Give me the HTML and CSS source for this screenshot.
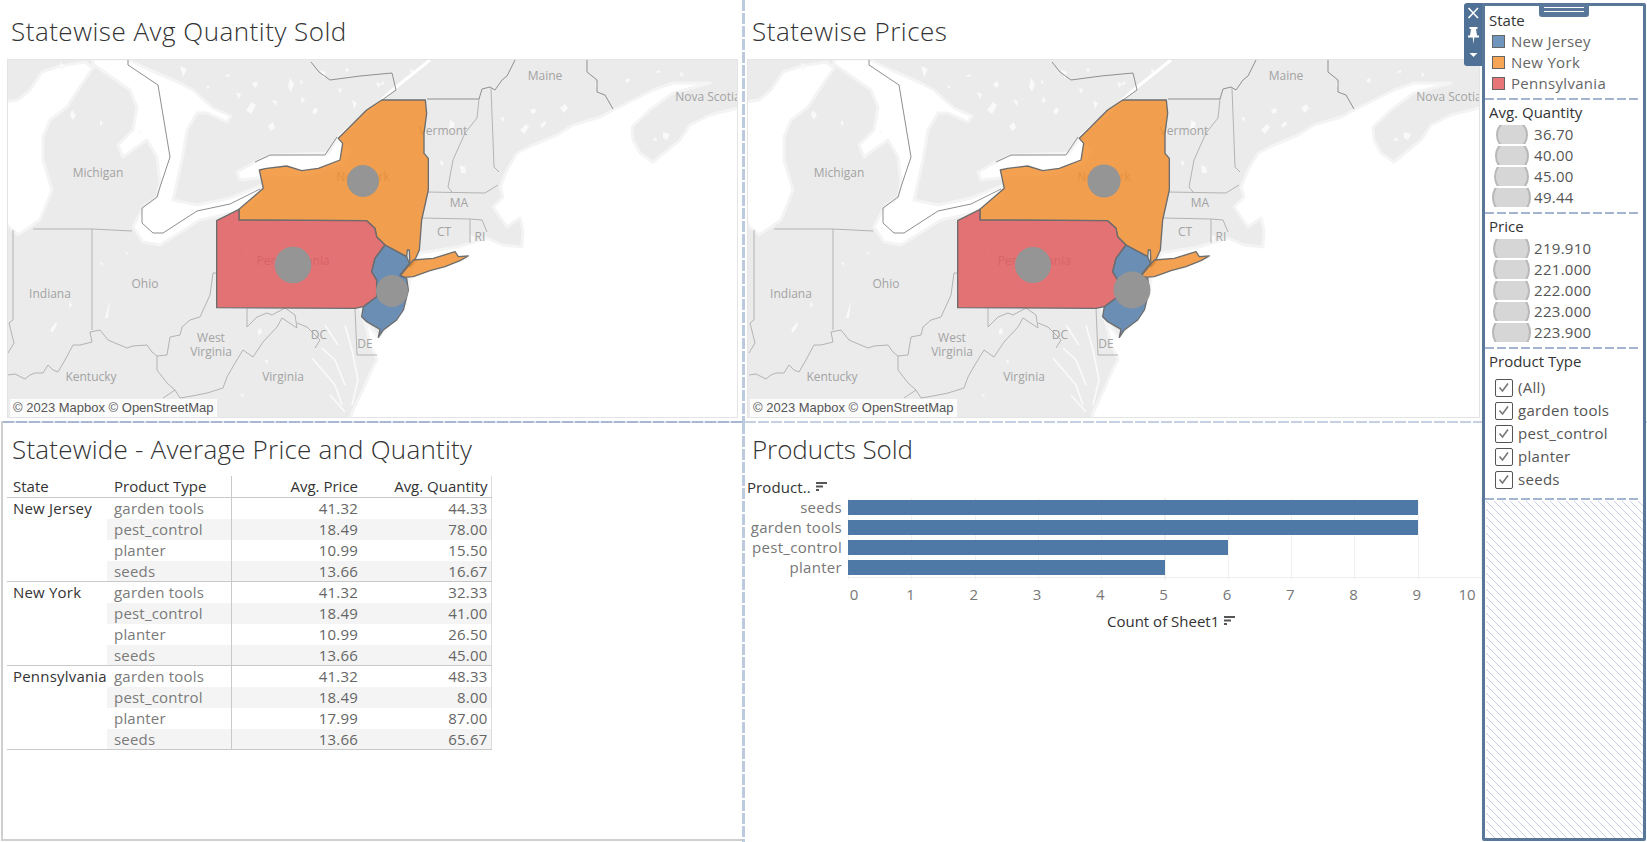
FILE: index.html
```html
<!DOCTYPE html>
<html lang="en">
<head>
<meta charset="utf-8">
<title>Dashboard</title>
<link rel="stylesheet" href="styles.css">
</head>
<body>
<div class="board">
  <section class="cell">
    <h2 class="title title-wide">Statewise Avg Quantity Sold</h2>
    <div class="map map-left">
      <svg class="map-svg" viewBox="7 59 731 359" preserveAspectRatio="none" aria-label="Map of quantity by state">
        <g id="basemap">
          <rect class="land" x="0" y="50" width="760" height="380"/>
          <g class="water">
            <path d="M745 106L738 108L710 115L690 125L680 140L665 152L653 162L640 153L633 140L632 127L650 110L673 93L710 83L673 83L653 90L633 100L613 110L600 117L573 125L557 135L533 145L517 153L507 170L500 187L503 197L493 207L507 227L520 218L523 230L522 247L503 245L487 238L457 247L420 253L413 267L408 290L403 310L378 337L362 317L363 305L360 307L367 330L370 347L373 350L377 360L373 367L365 385L352 413L349 425L745 425Z"/>
            <path d="M4 218L8 226L18 235L40 220L52 190L43 160L43 137L50 120L67 107L80 87L93 68L85 62L60 66L42 72L30 90L18 100L4 102Z"/>
            <path d="M93 59L93 64L130 90L137 107L133 130L118 145L123 157L147 140L157 157L160 183L157 197L143 207L133 227L143 242L160 245L200 220L233 213L262 197L260 186L230 198L197 205L173 200L182 160L187 130L197 113L207 113L227 122L231 116L213 108L193 90L180 83L150 70L127 59Z"/>
            <path d="M237 172L255 162L270 155L328 153L340 136L352 150L345 165L300 178L260 178L240 180Z"/>
            <path class="thin" d="M340 136L365 115L390 92L415 72L430 60"/>
            <path class="thinner" d="M345 325L352 350L358 380L352 405M322 348L335 360L345 385M312 358L335 385L342 405M325 325L338 345M330 395L345 412"/>
          </g>
          <g class="speck">
            <path d="M60 62l5 4-3 6zM180 66l7 3-4 8zM246 110l6-8 4 3-5 9zM268 126l5-4 2 6-4 3zM290 78l4 6-3 8-3-5zM320 70l6 2-2 7zM352 100l5 3-3 6zM72 110l4 5-3 5-3-5zM450 120l5 3-2 7-4-2zM520 130l6-6 3 3-5 7zM560 108l5-4 3 4-4 5zM245 250l4 3-3 3zM110 300l-3 10-2 8 3 0zM50 330l6-8 1 3-5 8zM258 330l3-2 1 5-4 2zM663 132l7 2-3 6-4-2zM460 165l5 2 1 6-5 0zM470 235l5 2-3 6z"/>
            <path d="M236 92l5 2-2 5zM252 84l4-3 2 4-3 3zM272 100l5 1-1 5zM302 96l3 5-4 2zM312 112l3-5 3 3-3 5zM338 88l4 1-2 5zM376 82l5 2-3 4zM410 68l4 3-3 4zM345 68l4 1-2 4zM530 110l5-2 1 4-4 2zM540 125l5-4 1 3-4 4zM500 118l4-1 0 5zM595 82l3 2-2 4zM625 80l4-2 1 3-3 2zM655 72l5-2 0 3zM680 72l4 2-3 3zM652 140l4-3 1 4zM138 130l3 1-1 4zM100 120l3 3-3 3zM70 300l2 6-3 2zM100 262l3 1-1 3zM125 252l4 1-2 2zM265 360l3 0-1 5zM240 395l4-1-1 3zM380 85l3-4 2 3zM440 160l4 3-3 3zM300 80l3 2-2 3zM206 86l4 0-2 3zM224 76l5-2 1 3z"/>
          </g>
          <g class="borders">
            <path class="strong" d="M128 60L128 65L158 85L170 157L160 187L157 197L142 208L142 223L153 233L163 233L197 211L230 204L260 189"/>
            <path class="strong" d="M255 162L270 155L325 155L337 137"/>
            <path class="strong" d="M311 62L319 72L330 80L345 78L360 76L392 73L396 90L382 100M427 99L479 99L482 89L490 87L495 90L502 80L507 76L515 60"/>
            <path d="M491 88L494 167L499 172M479 99L477 118L465 133L453 160L448 187L452 192M427 192L485 193L498 185M422 218L470 219L482 220L487 232M470 219L470 243"/>
            <path class="strong" d="M587 60L587 72L597 80L597 92L605 95L613 109"/>
            <path d="M33 229L92 229L132 231M92 229L92 330M13 230L13 320L9 323L14 343L8 353"/>
            <path d="M8 375L15 374L25 379L30 375L35 373L43 373L48 365L53 370L58 372L65 360L73 345L80 345L92 342L90 332L100 330L108 340L115 343L127 348L133 346L147 345L152 352L157 356L167 355L170 337L180 335L182 327L190 320L200 317L210 295L213 273L217 273"/>
            <path d="M157 356L157 370L167 383L175 390L163 398M175 390L180 398L192 396L207 393L223 388L227 377L235 363L243 350L253 357L263 342L277 327L282 318"/>
            <path d="M247 308L247 327L257 317L267 313L272 315L285 308L295 315L297 328L282 318M297 323L307 327L315 335L320 340L315 348M355 308L357 355L377 355"/>
          </g>
          <g class="labels">
            <text x="98" y="177">Michigan</text>
            <text x="545" y="80">Maine</text>
            <text x="708" y="101">Nova Scotia</text>
            <text x="443" y="135">Vermont</text>
            <text x="459" y="207">MA</text>
            <text x="444" y="236">CT</text>
            <text x="480" y="241">RI</text>
            <text x="145" y="288">Ohio</text>
            <text x="50" y="298">Indiana</text>
            <text x="211" y="342">West</text>
            <text x="211" y="356">Virginia</text>
            <text x="91" y="381">Kentucky</text>
            <text x="283" y="381">Virginia</text>
            <text x="319" y="339">DC</text>
            <text x="365" y="348">DE</text>
            <text x="363" y="181">New York</text>
            <text x="293" y="265">Pennsylvania</text>
          </g>
          <g class="states" transform="translate(200 90) scale(.33333)">
            <path class="st-ny" d="M676 30L680 70L672 130L672 190L685 205L685 300L665 390L658 480L640 520L630 530L628 480L622 480L620 500L555 465L530 440L525 415L500 392L117 390L117 358L190 295L178 240L200 235L260 228L305 242L355 235L420 210L428 160L415 145L450 110L500 60L545 30Z"/>
            <path class="st-ny" d="M600 558L640 510L700 505L765 485L775 500L805 498L780 512L735 530L690 542L640 560L610 562Z"/>
            <path class="st-pa" d="M50 392L117 358L117 390L500 392L525 415L530 440L555 465L525 505L515 545L530 570L530 620L490 650L465 655L50 653Z"/>
            <path class="st-nj" d="M555 465L620 500L628 520L600 555L620 565L625 600L610 660L590 690L550 720L535 742L540 718L500 695L485 680L490 650L530 620L530 570L515 545L525 505Z"/>
          </g>
        </g>
        <circle class="bubble" cx="363" cy="181" r="16"/>
        <circle class="bubble" cx="293" cy="265" r="18.3"/>
        <circle class="bubble" cx="392" cy="291" r="16"/>
      </svg>
      <span class="credit">© 2023 Mapbox © OpenStreetMap</span>
    </div>
  </section>
  <div class="vsep"></div>
  <section class="cell">
    <h2 class="title title-right title-wide">Statewise Prices</h2>
    <div class="map map-right">
      <svg class="map-svg" viewBox="6 59 733 359" preserveAspectRatio="none" aria-label="Map of price by state">
        <use href="#basemap"/>
        <circle class="bubble" cx="363" cy="181" r="16.5"/>
        <circle class="bubble" cx="292" cy="265" r="18"/>
        <circle class="bubble" cx="391" cy="290" r="18.5"/>
      </svg>
      <span class="credit">© 2023 Mapbox © OpenStreetMap</span>
    </div>
  </section>

  <section class="cell cell-table">
    <h2 class="title">Statewide - Average Price and Quantity</h2>
    <table class="crosstab">
      <thead>
        <tr><th class="c-state">State</th><th class="c-type">Product Type</th><th class="c-num">Avg. Price</th><th class="c-num">Avg. Quantity</th></tr>
      </thead>
      <tbody>
        <tr><th class="c-state" rowspan="4">New Jersey</th><td class="c-type">garden tools</td><td class="c-num">41.32</td><td class="c-num">44.33</td></tr>
        <tr class="alt"><td class="c-type">pest_control</td><td class="c-num">18.49</td><td class="c-num">78.00</td></tr>
        <tr><td class="c-type">planter</td><td class="c-num">10.99</td><td class="c-num">15.50</td></tr>
        <tr class="alt end"><td class="c-type">seeds</td><td class="c-num">13.66</td><td class="c-num">16.67</td></tr>
        <tr><th class="c-state" rowspan="4">New York</th><td class="c-type">garden tools</td><td class="c-num">41.32</td><td class="c-num">32.33</td></tr>
        <tr class="alt"><td class="c-type">pest_control</td><td class="c-num">18.49</td><td class="c-num">41.00</td></tr>
        <tr><td class="c-type">planter</td><td class="c-num">10.99</td><td class="c-num">26.50</td></tr>
        <tr class="alt end"><td class="c-type">seeds</td><td class="c-num">13.66</td><td class="c-num">45.00</td></tr>
        <tr><th class="c-state" rowspan="4">Pennsylvania</th><td class="c-type">garden tools</td><td class="c-num">41.32</td><td class="c-num">48.33</td></tr>
        <tr class="alt"><td class="c-type">pest_control</td><td class="c-num">18.49</td><td class="c-num">8.00</td></tr>
        <tr><td class="c-type">planter</td><td class="c-num">17.99</td><td class="c-num">87.00</td></tr>
        <tr class="alt end"><td class="c-type">seeds</td><td class="c-num">13.66</td><td class="c-num">65.67</td></tr>
      </tbody>
    </table>
  </section>
  <div class="vsep"></div>
  <section class="cell cell-chart">
    <h2 class="title title-right">Products Sold</h2>
    <div class="chart">
      <div class="chart-head">Product..
        <svg class="sort" viewBox="0 0 11 9" aria-hidden="true"><path d="M0 0h11v2H0zM0 3.500h7v2H0zM0 7h3v2H0z"/></svg>
      </div>
      <div class="bars">
        <div class="bar-row"><span class="bar-label">seeds</span><span class="bar-track"><span class="bar" style="width:90%"></span></span></div>
        <div class="bar-row"><span class="bar-label">garden tools</span><span class="bar-track"><span class="bar" style="width:90%"></span></span></div>
        <div class="bar-row"><span class="bar-label">pest_control</span><span class="bar-track"><span class="bar" style="width:60%"></span></span></div>
        <div class="bar-row"><span class="bar-label">planter</span><span class="bar-track"><span class="bar" style="width:50%"></span></span></div>
      </div>
      <div class="ticks">
        <span>0</span><span>1</span><span>2</span><span>3</span><span>4</span><span>5</span><span>6</span><span>7</span><span>8</span><span>9</span><span>10</span>
      </div>
      <div class="axis-title">Count of Sheet1
        <svg class="sort" viewBox="0 0 11 9" aria-hidden="true"><path d="M0 0h11v2H0zM0 3.500h7v2H0zM0 7h3v2H0z"/></svg>
      </div>
    </div>
  </section>
</div>

<aside class="tools" aria-label="Panel tools">
  <svg viewBox="0 0 19 63" aria-hidden="true">
    <path class="t-x" d="M4.500 5L14 15M14 5L4.500 15"/>
    <path class="t-fill" d="M5.500 24h8v2h-1.500L13 32.500H15V34.500H10.300L9.500 41L8.700 34.500H4V32.500H6L7 26H5.500z"/>
    <path class="t-fill" d="M5.500 50h8l-4 4z"/>
  </svg>
</aside>

<aside class="panel">
  <div class="grip"><span></span><span></span></div>
  <div class="group group-state">
    <h3 class="group-title">State</h3>
    <div class="legend-row"><span class="swatch sw-nj"></span>New Jersey</div>
    <div class="legend-row"><span class="swatch sw-ny"></span>New York</div>
    <div class="legend-row"><span class="swatch sw-pa"></span>Pennsylvania</div>
  </div>
  <div class="group group-size">
    <h3 class="group-title">Avg. Quantity</h3>
    <div class="size-row"><span class="size-box"><span class="dot d32"></span></span>36.70</div>
    <div class="size-row"><span class="size-box"><span class="dot d34"></span></span>40.00</div>
    <div class="size-row"><span class="size-box"><span class="dot d35"></span></span>45.00</div>
    <div class="size-row"><span class="size-box"><span class="dot d38"></span></span>49.44</div>
  </div>
  <div class="group group-size">
    <h3 class="group-title">Price</h3>
    <div class="size-row"><span class="size-box"><span class="dot d37"></span></span>219.910</div>
    <div class="size-row"><span class="size-box"><span class="dot d37"></span></span>221.000</div>
    <div class="size-row"><span class="size-box"><span class="dot d37"></span></span>222.000</div>
    <div class="size-row"><span class="size-box"><span class="dot d37"></span></span>223.000</div>
    <div class="size-row"><span class="size-box"><span class="dot d38"></span></span>223.900</div>
  </div>
  <div class="group group-filter">
    <h3 class="group-title">Product Type</h3>
    <label class="check-row"><span class="check"><svg viewBox="0 0 16 16" aria-hidden="true"><path d="M3.500 7.500L6.500 11L12 3.500"/></svg></span>(All)</label>
    <label class="check-row"><span class="check"><svg viewBox="0 0 16 16" aria-hidden="true"><path d="M3.500 7.500L6.500 11L12 3.500"/></svg></span>garden tools</label>
    <label class="check-row"><span class="check"><svg viewBox="0 0 16 16" aria-hidden="true"><path d="M3.500 7.500L6.500 11L12 3.500"/></svg></span>pest_control</label>
    <label class="check-row"><span class="check"><svg viewBox="0 0 16 16" aria-hidden="true"><path d="M3.500 7.500L6.500 11L12 3.500"/></svg></span>planter</label>
    <label class="check-row"><span class="check"><svg viewBox="0 0 16 16" aria-hidden="true"><path d="M3.500 7.500L6.500 11L12 3.500"/></svg></span>seeds</label>
  </div>
  <div class="hatch"></div>
</aside>
</body>
</html>
```

FILE: styles.css
```css
* { box-sizing: border-box; }
html, body { margin: 0; padding: 0; }
body {
  width: 1647px;
  height: 842px;
  overflow: hidden;
  position: relative;
  background: #fff;
  font-family: "Open Sans", "Noto Sans", sans-serif;
  color: #333;
}

.board {
  display: grid;
  grid-template-columns: 742px 3px 902px;
  grid-template-rows: 423px 419px;
  height: 842px;
}

.cell { min-width: 0; }

.vsep {
  background: repeating-linear-gradient(180deg, #bccade 0 11px, transparent 11px 13px);
}

.title {
  margin: 0;
  height: 59px;
  padding: 14px 0 0 11px;
  font-size: 26px;
  line-height: 34px;
  font-weight: 300;
  letter-spacing: .22px;
  color: #333;
}
.title-wide { letter-spacing: .5px; }
.title-right { padding-left: 7px; }

.map { position: relative; height: 359px; outline: 1px solid #e4e4e4; outline-offset: -1px; }
.map-left { margin-left: 7px; width: 731px; }
.map-right { margin-left: 2px; width: 733px; }
.map-svg { display: block; width: 100%; height: 100%; }

.land { fill: #ebebeb; }
.water, .speck { filter: blur(.6px); }
.water path { fill: #fff; stroke: #f4f4f4; stroke-width: 3; stroke-linejoin: round; }
.water .thin { fill: none; stroke: #fff; stroke-width: 3; }
.water .thinner { fill: none; stroke: #fafafa; stroke-width: 1.600; }
.speck { fill: #f9f9f9; }
.borders path { fill: none; stroke: #adadad; stroke-width: .9; }
.borders .strong { stroke: #8f8f8f; stroke-width: 1; }
.labels text { font-size: 12px; fill: #a3a3a3; text-anchor: middle; }
.states path { stroke: #6d6d6d; stroke-width: 4; stroke-linejoin: round; }
.st-ny { fill: rgba(242, 142, 43, .82); }
.st-pa { fill: rgba(225, 87, 89, .82); }
.st-nj { fill: rgba(78, 121, 167, .82); }
.bubble { fill: #959595; }

.credit {
  position: absolute;
  left: 3px;
  bottom: 1px;
  height: 18px;
  padding: 0 3px;
  background: rgba(255, 255, 255, .85);
  font-family: "Liberation Sans", Arial, sans-serif;
  font-size: 13px;
  line-height: 18px;
  color: #555;
  white-space: nowrap;
}

.cell-table {
  border-left: 2px solid #cfcfcf;
  border-bottom: 2px solid #cfcfcf;
  margin: -2px 0 1px 1px;
  position: relative;
  background: repeating-linear-gradient(90deg, #a9b8d2 0 11px, #dfe5ef 11px 13px) top / 100% 2px no-repeat;
}
.cell-table .title { height: 55px; padding: 11px 0 0 9px; }

.crosstab {
  border-collapse: collapse;
  table-layout: fixed;
  width: 484px;
  margin-left: 4px;
  font-size: 15px;
  letter-spacing: .2px;
}
.crosstab th, .crosstab td { padding: 0; height: 21px; line-height: 20px; white-space: nowrap; font-weight: 400; vertical-align: top; }
.crosstab thead th { height: 21px; line-height: 21px; color: #333; border-bottom: 1px solid #c9c9c9; font-weight: 500; vertical-align: bottom; letter-spacing: 0; }
.crosstab .c-state { width: 100px; padding-left: 6px; text-align: left; color: #333; border-bottom: 1px solid #c9c9c9; }
.crosstab .c-type { width: 124px; padding-left: 7px; text-align: left; color: #7a7a7a; border-right: 1px solid #c9c9c9; }
.crosstab .c-num { width: 130px; padding-right: 3px; text-align: right; color: #666; }
.crosstab .c-num:last-child { border-right: 1px solid #dcdcdc; }
.crosstab thead .c-type, .crosstab thead .c-num { color: #333; }
.crosstab .alt td { background: #f4f4f4; }
.crosstab .end td { border-bottom: 1px solid #c9c9c9; }

.cell-chart { position: relative; background: repeating-linear-gradient(90deg, #c5d0e3 0 11px, transparent 11px 13px) top / 100% 2px no-repeat; margin-top: -2px; }
.cell-chart .title { height: 56px; padding: 11px 0 0 7px; letter-spacing: -.1px; }

.chart { padding-left: 2px; font-size: 15px; }
.chart-head { display: flex; align-items: center; gap: 5px; height: 19px; color: #333; font-weight: 500; letter-spacing: .1px; }
.sort { width: 11px; height: 9px; fill: #555; flex: none; }

.bars {
  margin-top: 2px;
  width: 735px;
  height: 82px;
  background:
    linear-gradient(#eee, #eee) 101px 79px / 634px 1px no-repeat,
    repeating-linear-gradient(90deg, #f1f1f1 0 1px, transparent 1px 63.300px) 101px 0 / 634px 100% no-repeat;
}
.bar-row { display: flex; align-items: center; height: 20px; }
.bar-label { width: 95px; margin: -2px 6px 0 0; flex: none; text-align: right; color: #777; letter-spacing: .3px; }
.bar-track { display: block; width: 633px; flex: none; }
.bar { display: block; height: 15px; background: #4e79a7; margin-top: -1px; }

.ticks { display: flex; margin-left: 68.500px; margin-top: 5px; color: #777; line-height: 19px; }
.ticks span { width: 63.300px; flex: none; text-align: center; }
.ticks span:first-child { padding-left: 14px; }
.ticks span:last-child { padding-right: 26px; }

.axis-title { display: flex; align-items: center; gap: 5px; margin: 7px 0 0 360px; height: 19px; color: #333; font-weight: 500; }

.tools {
  position: absolute;
  left: 1464px;
  top: 3px;
  width: 19px;
  height: 63px;
  background: #4f7195;
  border-radius: 3px 0 0 3px;
}
.tools svg { display: block; width: 19px; height: 63px; }
.t-x { stroke: #fff; stroke-width: 1.600; fill: none; }
.t-fill { fill: #fff; }

.panel {
  position: absolute;
  left: 1482px;
  top: 3px;
  width: 164px;
  height: 838px;
  border: 3px solid #587799;
  border-radius: 2px;
  background: #fff;
  display: flex;
  flex-direction: column;
  font-size: 15px;
  letter-spacing: .3px;
  color: #666;
}
.grip {
  position: absolute;
  left: 54px;
  top: -2px;
  width: 50px;
  height: 13px;
  background: #587799;
  border-radius: 0 0 3px 3px;
  display: flex;
  flex-direction: column;
  gap: 3px;
  padding: 3px 5px 0;
}
.grip span { display: block; height: 1px; background: #fff; }

.group { padding: 0 3px 0 4px; flex: none; }
.group::after {
  content: "";
  display: block;
  height: 2px;
  margin: 0 0 0 -4px;
  background: repeating-linear-gradient(90deg, #a3b5d1 0 9px, transparent 9px 12px);
}
.group-title {
  margin: 0;
  height: 21px;
  font-size: 15px;
  line-height: 21px;
  font-weight: 500;
  color: #333;
  letter-spacing: 0;
}
.group-state { height: 94px; padding-top: 4px; }
.group-state::after { margin-top: 4px; }
.legend-row { display: flex; align-items: center; height: 21px; padding-left: 3px; line-height: 21px; }
.swatch { width: 13px; height: 13px; margin-right: 6px; border: 1px solid #666; flex: none; }
.sw-nj { background: #7096bd; }
.sw-ny { background: #f6a654; }
.sw-pa { background: #e87578; }

.group-size .group-title { margin-top: 2px; margin-bottom: 1px; }
.size-row { display: flex; align-items: center; height: 21px; line-height: 21px; color: #555; }
.size-box { width: 45px; height: 19px; overflow: hidden; display: flex; align-items: center; justify-content: center; flex: none; }
.dot { display: block; flex: none; border-radius: 50%; background: #d6d6d6; border: 2px solid #b8b8b8; }
.d32 { width: 32px; height: 32px; }
.d34 { width: 34px; height: 34px; }
.d35 { width: 35px; height: 35px; }
.d37 { width: 37px; height: 37px; }
.d38 { width: 39px; height: 39px; }
.group-size::after { margin-top: 4px; }

.group-filter .group-title { margin-top: 2px; margin-bottom: 4px; }
.check-row { display: flex; align-items: center; height: 23px; padding-left: 6px; color: #555; line-height: 23px; }
.check { width: 18px; height: 18px; margin-right: 5px; border: 1px solid #555; border-radius: 2px; flex: none; display: block; }
.check svg { display: block; width: 16px; height: 16px; fill: none; stroke: #777; stroke-width: 1.600; }
.group-filter::after { margin-top: 7px; }

.hatch {
  flex: 1;
  margin: 1px 0 0 1px;
  background: repeating-linear-gradient(45deg, #c7d1e4 0 1px, #fff 1px 5.660px);
}
```
